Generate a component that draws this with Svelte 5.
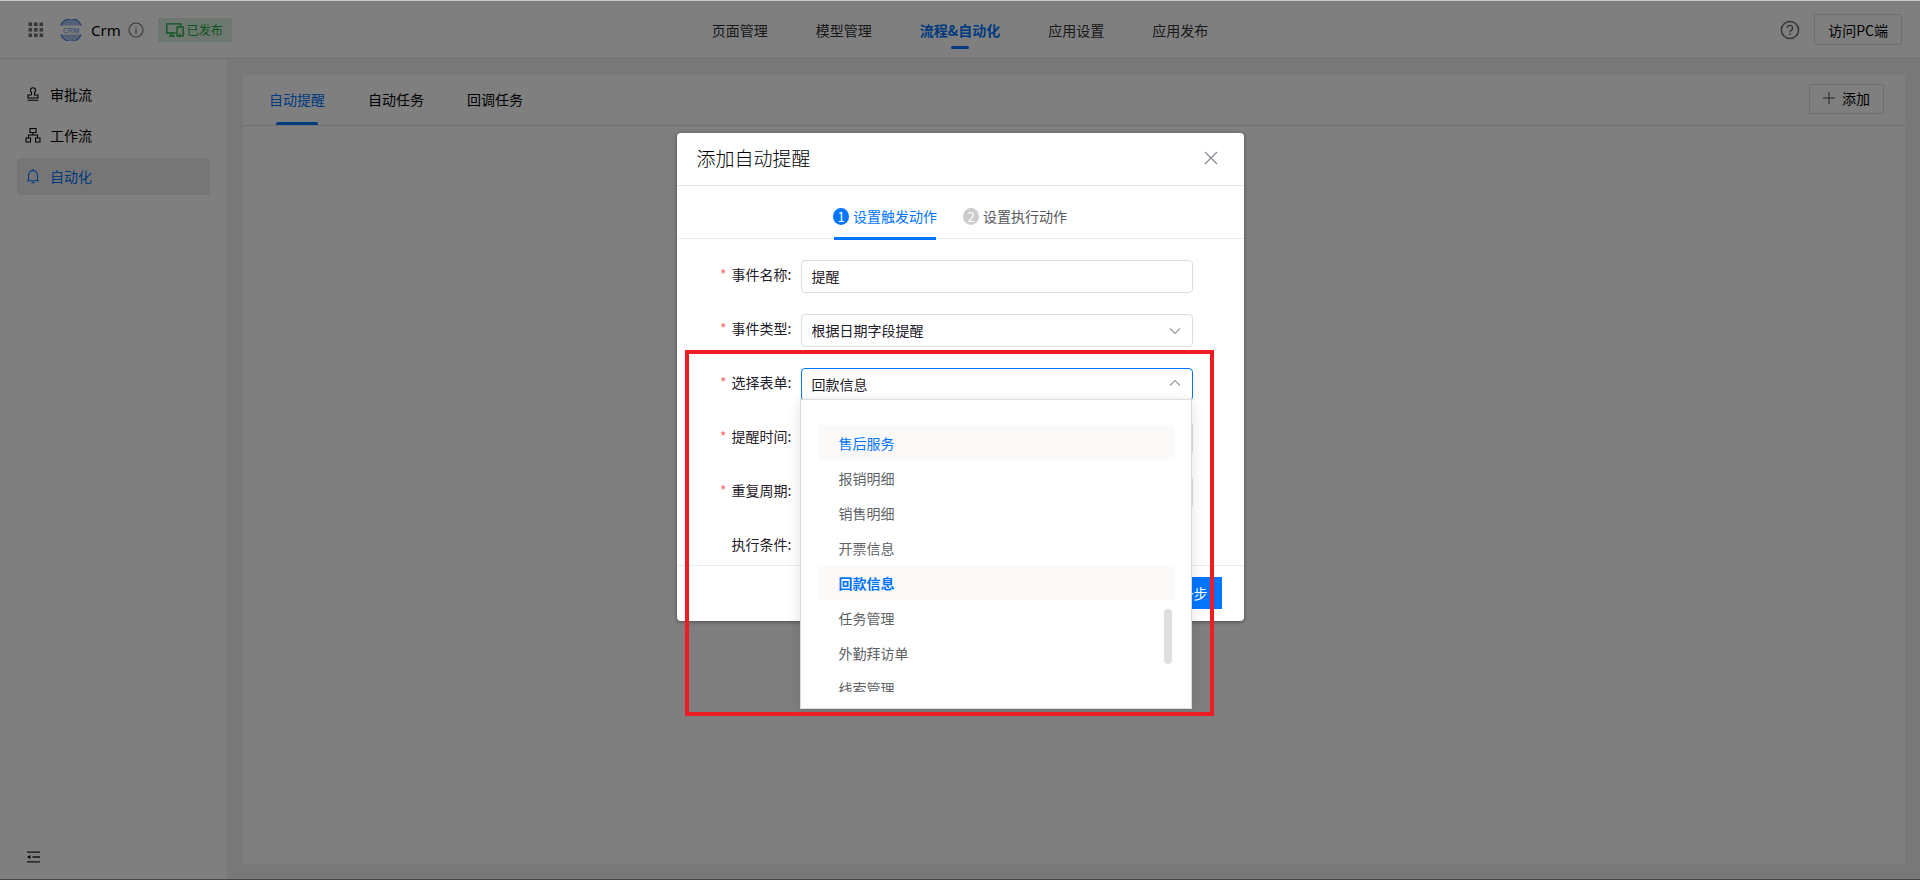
<script>
  const navItems = ['页面管理', '模型管理', '流程&自动化', '应用设置', '应用发布'];
  const sideItems = [
    { label: '审批流', icon: 'stamp' },
    { label: '工作流', icon: 'flow' },
    { label: '自动化', icon: 'bell' }
  ];
  const tabs = ['自动提醒', '自动任务', '回调任务'];
  const steps = ['设置触发动作', '设置执行动作'];
  const forms = ['售后服务', '报销明细', '销售明细', '开票信息', '回款信息', '任务管理', '外勤拜访单', '线索管理'];

  let activeNav = $state('流程&自动化');
  let activeSide = $state('自动化');
  let activeTab = $state('自动提醒');
  let activeStep = $state(0);
  let eventName = $state('提醒');
  let selectedForm = $state('回款信息');
  let hoveredForm = $state('售后服务');
</script>

{#snippet chevron(up)}
  <svg class="chevron" class:up width="12" height="8" viewBox="0 0 12 8" aria-hidden="true">
    <path d="M1 1.5 6 6.5 11 1.5" fill="none" stroke="currentColor" stroke-width="1.2" />
  </svg>
{/snippet}

<div class="page">
  <header class="topbar">
    <div class="brand">
      <button class="icon-btn" aria-label="应用列表">
        <svg width="16" height="16" viewBox="0 0 16 16" fill="#6d7278">
          {#each [0, 1, 2] as r}
            {#each [0, 1, 2] as c}
              <rect x={c * 5.5 + 0.5} y={r * 5.5 + 0.5} width="3.6" height="3.6" />
            {/each}
          {/each}
        </svg>
      </button>
      <svg class="logo" width="22" height="22" viewBox="0 0 22 22" aria-hidden="true">
        <path d="M1.8 6.5A10.2 10.2 0 0 1 20.2 6.5Z" fill="#a9c0ea" />
        <path d="M1.8 15.5A10.2 10.2 0 0 0 20.2 15.5Z" fill="#a9c0ea" />
        <path d="M1 6.5A10.8 10.8 0 0 1 21 6.5M1 15.5A10.8 10.8 0 0 0 21 15.5" fill="none" stroke="#4a7fdc" stroke-width="1.4" />
        <text x="11" y="13.6" text-anchor="middle" font-size="7" font-family="Liberation Sans, Arial, sans-serif" fill="#4a7fdc">CRM</text>
      </svg>
      <span class="name">Crm</span>
      <svg class="info" width="16" height="16" viewBox="0 0 16 16" fill="none" stroke="#73767c" aria-hidden="true">
        <circle cx="8" cy="8" r="7" stroke-width="1.2" />
        <path d="M8 6.8V12M8 4.2V5.4" stroke-width="1.2" />
      </svg>
      <span class="badge">
        <svg width="18" height="14" viewBox="0 0 18 14" fill="none" stroke="currentColor" stroke-width="1.3" aria-hidden="true">
          <path d="M9.5 10H.8V.8H14.8V3M5.5 10V13M3 13H9" />
          <rect x="11" y="4" width="6.2" height="9" rx=".6" />
          <path d="M13.2 11.2H15" />
        </svg>
        已发布
      </span>
    </div>
    <nav class="mainnav">
      {#each navItems as item}
        <button class:active={activeNav === item} onclick={() => (activeNav = item)}>{item}</button>
      {/each}
    </nav>
    <div class="actions">
      <button class="icon-btn" aria-label="帮助">
        <svg width="20" height="20" viewBox="0 0 20 20" fill="none" stroke="#666b73">
          <circle cx="10" cy="10" r="8.6" stroke-width="1.5" />
          <path d="M7.4 8A2.6 2.6 0 1 1 11.2 10.3C10.3 10.8 10 11.2 10 12.2" stroke-width="1.4" />
          <path d="M10 13.5V15" stroke-width="1.5" />
        </svg>
      </button>
      <button class="plain visit">访问PC端</button>
    </div>
  </header>

  <div class="body">
    <aside class="side">
      <nav>
        {#each sideItems as item}
          <button class:active={activeSide === item.label} onclick={() => (activeSide = item.label)}>
            <svg width="16" height="16" viewBox="0 0 16 16" fill="none" stroke="currentColor" stroke-width="1.1" aria-hidden="true">
              {#if item.icon === 'stamp'}
                <path d="M6.5 9V6.4A2.6 2.6 0 1 1 9.5 6.4V9H13V12H3V9H6.5M2.6 14.2H13.4" />
              {:else if item.icon === 'flow'}
                <path d="M5 1.5H11V5.5H5ZM8 5.5V8M3.5 11V8H12.5V11M1 11H5.5V15H1ZM10.5 11H15V15H10.5Z" />
              {:else}
                <path d="M3.6 12.6V7A4.4 4.4 0 0 1 12.4 7V12.6M2 12.8H14M6.6 14.6H9.4M8 1V2.4" />
              {/if}
            </svg>
            {item.label}
          </button>
        {/each}
      </nav>
      <button class="icon-btn collapse" aria-label="收起菜单">
        <svg width="14" height="12" viewBox="0 0 14 12" aria-hidden="true">
          <path d="M0 1.2H13M5.5 6H13M0 10.8H13" stroke="#222" stroke-width="1.3" />
          <path d="M0 6 3.4 4V8Z" fill="#000" />
        </svg>
      </button>
    </aside>

    <main>
      <section class="card">
        <div class="tabs">
          {#each tabs as tab}
            <button class="tab" class:active={activeTab === tab} onclick={() => (activeTab = tab)}>{tab}</button>
          {/each}
          <button class="plain add">
            <svg width="12" height="12" viewBox="0 0 12 12" aria-hidden="true">
              <path d="M6 0V12M0 6H12" stroke="#45484d" stroke-width="1" />
            </svg>
            添加
          </button>
        </div>
      </section>
    </main>
  </div>

  <div class="mask">
    <div class="modal" role="dialog" aria-modal="true" aria-labelledby="dlg-title">
      <div class="modal-head">
        <h2 id="dlg-title">添加自动提醒</h2>
        <button class="icon-btn" aria-label="关闭">
          <svg width="14" height="14" viewBox="0 0 14 14" aria-hidden="true">
            <path d="M1 1 13 13M13 1 1 13" stroke="#85888e" stroke-width="1.2" />
          </svg>
        </button>
      </div>
      <div class="steps">
        {#each steps as step, i}
          <button class:active={activeStep === i} onclick={() => (activeStep = i)}>
            <span class="num">{i + 1}</span>{step}
          </button>
        {/each}
      </div>
      <form class="form">
        <div class="row">
          <label class="required" for="f-name">事件名称:</label>
          <div class="field"><input id="f-name" type="text" bind:value={eventName} /></div>
        </div>
        <div class="row">
          <label class="required" for="f-type">事件类型:</label>
          <div class="field">
            <select id="f-type"><option>根据日期字段提醒</option></select>
            {@render chevron(false)}
          </div>
        </div>
        <div class="row">
          <label class="required" for="f-form">选择表单:</label>
          <div class="field open">
            <select id="f-form" bind:value={selectedForm}>
              {#each forms as f}<option>{f}</option>{/each}
            </select>
            {@render chevron(true)}
            <div class="dropdown">
              <ul role="listbox" aria-label="选择表单">
                {#each forms as f}
                  <li role="option" aria-selected={selectedForm === f}>
                    <button
                      type="button"
                      class:hover={hoveredForm === f}
                      class:selected={selectedForm === f}
                      onmouseenter={() => (hoveredForm = f)}
                      onclick={() => (selectedForm = f)}>{f}</button>
                  </li>
                {/each}
              </ul>
              <span class="thumb"></span>
            </div>
          </div>
        </div>
        <div class="row">
          <label class="required" for="f-time">提醒时间:</label>
          <div class="field"><input id="f-time" type="text" /></div>
        </div>
        <div class="row">
          <label class="required" for="f-cycle">重复周期:</label>
          <div class="field"><select id="f-cycle"></select></div>
        </div>
        <div class="row last">
          <span class="label">执行条件:</span>
        </div>
      </form>
      <div class="modal-foot">
        <button class="primary">下一步</button>
      </div>
      <div class="highlight"></div>
    </div>
  </div>
</div>

<style>
  :global(body) {
    font-family: 'Noto Sans CJK SC', 'Microsoft YaHei', sans-serif;
    font-size: 14px;
    font-weight: 400;
    color: #000;
  }
  button, input, select {
    font: inherit;
    color: inherit;
    margin: 0;
    padding: 0;
    border: 0;
    background: none;
    box-sizing: border-box;
  }
  button { cursor: pointer; white-space: nowrap; }
  svg { display: block; flex: none; }

  .page {
    position: relative;
    display: flex;
    flex-direction: column;
    min-height: 100vh;
    box-sizing: border-box;
    border-top: 1px solid #c8cacb;
    border-bottom: 1px solid #47434d;
    background: #f0f0f0;
  }
  .topbar {
    display: grid;
    grid-template-columns: 1fr auto 1fr;
    align-items: center;
    height: 58px;
    box-sizing: border-box;
    padding: 0 18px;
    background: #fff;
    border-bottom: 1px solid #dedede;
  }
  .brand { display: flex; align-items: center; padding-left: 10px; }
  .logo { margin-left: 16px; }
  .name { margin-left: 9px; font-family: 'Noto Sans', sans-serif; font-size: 15px; }
  .info { margin-left: 7px; }
  .badge {
    display: flex;
    align-items: center;
    gap: 3px;
    height: 24px;
    box-sizing: border-box;
    margin-left: 14px;
    padding: 0 9px 0 8px;
    font-size: 12px;
    background: #dcefe1;
    color: #1ba83c;
  }
  .mainnav { display: flex; gap: 48px; height: 100%; }
  .mainnav button { position: relative; color: #303133; }
  .mainnav .active { color: #0075ff; font-weight: 700; }
  .mainnav .active::after {
    content: '';
    position: absolute;
    left: calc(50% - 9px);
    bottom: 9px;
    width: 18px;
    height: 3px;
    border-radius: 2px;
    background: #0075ff;
  }
  .actions { display: flex; align-items: center; justify-content: flex-end; gap: 14px; }
  .plain { border: 1px solid #dcdcdc; border-radius: 2px; background: #fff; }
  .visit { height: 31px; padding: 0 13px; }

  .body { flex: 1; display: flex; }
  .side {
    display: flex;
    flex-direction: column;
    justify-content: space-between;
    width: 227px;
    flex: none;
    box-sizing: border-box;
    padding: 17px 17px 16px;
    background: #fff;
  }
  .side nav { display: flex; flex-direction: column; gap: 4px; }
  .side nav button {
    display: flex;
    align-items: center;
    gap: 9px;
    height: 37px;
    padding: 0 0 2px 8px;
    border-radius: 3px;
  }
  .side .active { background: #ececec; color: #0075ff; }
  .collapse { align-self: flex-start; margin-left: 10px; }
  main { flex: 1; display: flex; padding: 16px 15px 15px 16px; }
  .card { flex: 1; background: #fff; }
  .tabs {
    display: flex;
    align-items: center;
    gap: 43px;
    height: 51px;
    box-sizing: border-box;
    padding: 0 21px 0 26px;
    border-bottom: 1px solid #e0e0e0;
  }
  .tab { position: relative; align-self: stretch; padding-bottom: 2px; }
  .tab.active { color: #0075ff; }
  .tab.active::after {
    content: '';
    position: absolute;
    left: 7px;
    right: 7px;
    bottom: 0;
    height: 3px;
    border-radius: 2px 2px 0 0;
    background: #0075ff;
  }
  .add {
    display: flex;
    align-items: center;
    gap: 7px;
    height: 30px;
    margin-left: auto;
    margin-top: -2px;
    padding: 0 13px 2px;
  }

  .mask {
    position: absolute;
    inset: 0;
    display: flex;
    justify-content: center;
    align-items: flex-start;
    padding-top: 132px;
    background: rgba(0, 0, 0, 0.5);
  }
  .modal {
    position: relative;
    width: min(567px, 100%);
    border-radius: 4px;
    background: #fff;
    box-shadow: 0 1px 4px rgba(0, 0, 0, 0.4);
    color: #1f2029;
  }
  .modal-head {
    display: flex;
    align-items: center;
    justify-content: space-between;
    height: 53px;
    box-sizing: border-box;
    padding: 0 26px 2px 20px;
    border-bottom: 1px solid #e4e5e7;
  }
  h2 { margin: 0; font-size: 19px; font-weight: 300; line-height: 24px; color: #000; }
  .steps {
    display: flex;
    justify-content: center;
    gap: 26px;
    height: 53px;
    box-sizing: border-box;
    padding-right: 20px;
    border-bottom: 1px solid #eaebed;
  }
  .steps button {
    position: relative;
    display: flex;
    align-items: center;
    gap: 4px;
    padding-top: 8px;
    color: #55575c;
  }
  .steps .active { color: #0075ff; }
  .steps .active::after {
    content: '';
    position: absolute;
    left: 1px;
    right: 1px;
    bottom: -2px;
    height: 3px;
    background: #0075ff;
  }
  .num {
    width: 16px;
    height: 17px;
    line-height: 17px;
    border-radius: 50%;
    font-size: 13px;
    color: #fff;
    background: #ccc;
  }
  .steps .active .num { background: #0075ff; }

  .form {
    display: flex;
    flex-direction: column;
    gap: 21px;
    padding: 21px 51px 0 43px;
  }
  .row { display: flex; height: 33px; }
  .row.last { height: 35px; }
  label, .label {
    width: 81px;
    box-sizing: border-box;
    padding: 0 9px 0 0;
    line-height: 28px;
    text-align: right;
    white-space: nowrap;
    flex: none;
  }
  .required::before { content: '*'; margin-right: 5px; color: #f56c6c; }
  .field { position: relative; flex: 1; }
  .field input, .field select {
    width: 100%;
    height: 33px;
    padding: 0 10px 2px;
    border: 1px solid #dcdddf;
    border-radius: 4px;
    background: #fff;
    appearance: none;
    outline: none;
  }
  .field.open select { border-color: #0075ff; }
  .chevron { position: absolute; right: 12px; top: 13px; color: #9a9ea6; pointer-events: none; }
  .chevron.up { top: 11px; transform: rotate(180deg); }

  .dropdown {
    position: absolute;
    z-index: 2;
    left: -1px;
    right: 1px;
    top: 31px;
    padding: 25px 16px 16px 17px;
    border: 1px solid #dcdcdc;
    background: #fff;
    box-shadow: 0 2px 12px rgba(0, 0, 0, 0.12);
  }
  .dropdown ul {
    height: 267px;
    margin: 0;
    padding: 0;
    overflow: hidden;
    list-style: none;
  }
  .dropdown button {
    width: 100%;
    height: 35px;
    display: block;
    padding-left: 21px;
    text-align: left;
    color: #606266;
  }
  .dropdown .hover, .dropdown .selected { background: #fbfaf8; color: #0075ff; }
  .dropdown .selected { font-weight: 700; }
  .thumb {
    position: absolute;
    right: 19px;
    top: 209px;
    width: 8px;
    height: 55px;
    border-radius: 4px;
    background: #dddee0;
  }

  .modal-foot {
    display: flex;
    justify-content: flex-end;
    height: 56px;
    box-sizing: border-box;
    padding: 11px 22px 0;
    border-top: 1px solid #eaebed;
  }
  .primary { height: 32px; padding: 0 14px; background: #0075ff; color: #fff; }
  .highlight {
    position: absolute;
    z-index: 3;
    left: 8px;
    right: 30px;
    top: 217px;
    height: 358px;
    border: 4px solid #ee1c24;
    pointer-events: none;
  }
</style>
